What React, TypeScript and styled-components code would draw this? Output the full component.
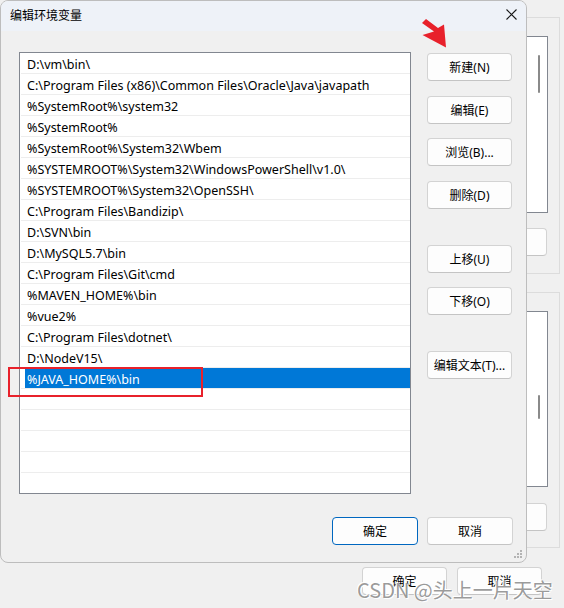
import React from "react";
import styled, { createGlobalStyle, css } from "styled-components";

const UI_FONT = `"Noto Sans", "Noto Sans CJK SC", sans-serif`;
const CJK_FONT = `"Noto Sans CJK SC", "Noto Sans", sans-serif`;

const Global = createGlobalStyle`
  html, body { margin: 0; padding: 0; background: #f0f0f0; }
  body { font-family: ${UI_FONT}; -webkit-font-smoothing: antialiased; }
`;

const Desktop = styled.div`
  position: relative;
  width: 564px;
  height: 608px;
  overflow: hidden;
  background: #f0f0f0;
`;

/* ---------- window behind ---------- */
const BackWindow = styled.div`
  display: flex;
  flex-direction: column;
  align-items: flex-end;
  box-sizing: border-box;
  height: 100%;
  padding: 17px 4px 0 0;
`;

const GroupBox = styled.div<{ $h: number; $mt?: number }>`
  width: 260px;
  height: ${(p) => p.$h}px;
  margin-top: ${(p) => p.$mt ?? 0}px;
  box-sizing: border-box;
  border: 1px solid #dcdcdc;
  display: flex;
  flex-direction: column;
  align-items: flex-end;
  padding: 18px 11px 0 0;
`;

const BgList = styled.div<{ $h: number }>`
  width: 220px;
  height: ${(p) => p.$h}px;
  box-sizing: border-box;
  background: #ffffff;
  border: 1px solid #828790;
  display: flex;
  justify-content: flex-end;
`;

const BgTrack = styled.div`
  width: 17px;
  height: 100%;
  display: flex;
  flex-direction: column;
  padding-left: 8px;
  box-sizing: border-box;
`;

const BgThumb = styled.div<{ $top: number; $h: number }>`
  width: 2px;
  height: ${(p) => p.$h}px;
  margin-top: ${(p) => p.$top}px;
  background: #8a8a8a;
  border-radius: 1px;
`;

const ButtonBase = css`
  box-sizing: border-box;
  height: 28px;
  background: #fdfdfd;
  border: 1px solid #d3d3d3;
  border-bottom-color: #c4c4c4;
  border-radius: 4px;
  font-family: ${UI_FONT};
  font-size: 12px;
  color: #000;
  display: flex;
  align-items: center;
  justify-content: center;
  padding: 0;
  white-space: nowrap;
`;

const BgButton = styled.div<{ $mt?: number; $mr?: number }>`
  ${ButtonBase};
  width: 85px;
  margin-top: ${(p) => p.$mt ?? 0}px;
  margin-right: ${(p) => p.$mr ?? 0}px;
`;

const BgFooter = styled.div`
  display: flex;
  gap: 10px;
  margin-top: 19px;
  margin-right: 18px;
`;

/* ---------- dialog ---------- */
const Dialog = styled.div`
  position: absolute;
  left: 0;
  top: 0;
  width: 527px;
  height: 563px;
  box-sizing: border-box;
  background: #f0f0f0;
  border: 1px solid #bdbdbd;
  border-radius: 8px;
  overflow: hidden;
  display: flex;
  flex-direction: column;
`;

const TitleBar = styled.div`
  height: 30px;
  flex: none;
  box-sizing: border-box;
  background: #eef2f8;
  display: flex;
  align-items: center;
  padding: 0 0 3px 9px;
`;

const Title = styled.span`
  font-family: ${CJK_FONT};
  font-size: 12px;
  color: #000;
`;

const CloseBtn = styled.div`
  margin-left: auto;
  width: 29px;
  height: 27px;
  display: flex;
  align-items: center;
  justify-content: center;
`;

const Body = styled.div`
  display: flex;
  flex-direction: column;
  padding: 21px 14px 0 18px;
`;

const MainRow = styled.div`
  display: flex;
  gap: 16px;
`;

const ListBox = styled.div`
  width: 392px;
  height: 442px;
  box-sizing: border-box;
  background: #fff;
  border: 1px solid #828790;
  overflow: hidden;
  padding-left: 1px;
`;

const Row = styled.div`
  height: 21px;
  box-sizing: border-box;
  border-bottom: 1px solid #ededed;
  display: flex;
  padding-left: 4px;
`;

const RowLabel = styled.div<{ $selected?: boolean }>`
  flex: 1;
  height: 20px;
  box-sizing: border-box;
  padding: 4px 0 0 2px;
  line-height: 16px;
  font-family: ${UI_FONT};
  font-size: 12.5px;
  white-space: nowrap;
  color: ${(p) => (p.$selected ? "#ffffff" : "#000000")};
  background: ${(p) => (p.$selected ? "#0078d7" : "transparent")};
`;

const SideColumn = styled.div`
  display: flex;
  flex-direction: column;
  width: 85px;
`;

const SideButton = styled.div<{ $mt: number }>`
  ${ButtonBase};
  width: 85px;
  margin-top: ${(p) => p.$mt}px;
`;

const Footer = styled.div`
  display: flex;
  justify-content: flex-end;
  gap: 9px;
  margin-top: 23px;
  margin-right: -1px;
`;

const FooterButton = styled.div<{ $primary?: boolean }>`
  ${ButtonBase};
  width: 86px;
  ${(p) =>
    p.$primary &&
    css`
      border: 1px solid #0067c0;
    `}
`;

const Grip = styled.svg`
  position: absolute;
  right: 3px;
  bottom: 3px;
`;

/* ---------- annotations ---------- */
const RedBox = styled.div`
  position: absolute;
  left: 8px;
  top: 367px;
  width: 195px;
  height: 30px;
  box-sizing: border-box;
  border: 2px solid #e8212b;
`;

const Arrow = styled.svg`
  position: absolute;
  left: 0;
  top: 0;
`;

const Watermark = styled.div`
  position: absolute;
  left: 357px;
  top: 577px;
  font-family: ${CJK_FONT};
  font-size: 20px;
  line-height: 26px;
  color: rgba(110, 110, 110, 0.7);
  text-shadow: 0 0 1px #fff, 1px 1px 0 #fff, -1px -1px 0 #fff;
  white-space: nowrap;
`;

const paths = [
  "D:\\vm\\bin\\",
  "C:\\Program Files (x86)\\Common Files\\Oracle\\Java\\javapath",
  "%SystemRoot%\\system32",
  "%SystemRoot%",
  "%SystemRoot%\\System32\\Wbem",
  "%SYSTEMROOT%\\System32\\WindowsPowerShell\\v1.0\\",
  "%SYSTEMROOT%\\System32\\OpenSSH\\",
  "C:\\Program Files\\Bandizip\\",
  "D:\\SVN\\bin",
  "D:\\MySQL5.7\\bin",
  "C:\\Program Files\\Git\\cmd",
  "%MAVEN_HOME%\\bin",
  "%vue2%",
  "C:\\Program Files\\dotnet\\",
  "D:\\NodeV15\\",
  "%JAVA_HOME%\\bin",
  "",
  "",
  "",
  "",
  "",
];

const sideButtons: { label: string; mt: number }[] = [
  { label: "新建(N)", mt: 1 },
  { label: "编辑(E)", mt: 15 },
  { label: "浏览(B)...", mt: 14 },
  { label: "删除(D)", mt: 15 },
  { label: "上移(U)", mt: 36 },
  { label: "下移(O)", mt: 14 },
  { label: "编辑文本(T)...", mt: 36 },
];

export default function App() {
  return (
    <>
      <Global />
      <Desktop>
        <BackWindow>
          <GroupBox $h={257}>
            <BgList $h={177}>
              <BgTrack>
                <BgThumb $top={18} $h={38} />
              </BgTrack>
            </BgList>
            <BgButton $mt={15} $mr={1} />
          </GroupBox>
          <GroupBox $h={256} $mt={18}>
            <BgList $h={176}>
              <BgTrack>
                <BgThumb $top={83} $h={24} />
              </BgTrack>
            </BgList>
            <BgButton $mt={16} $mr={1} />
          </GroupBox>
          <BgFooter>
            <BgButton>确定</BgButton>
            <BgButton>取消</BgButton>
          </BgFooter>
        </BackWindow>

        <Dialog>
          <TitleBar>
            <Title>编辑环境变量</Title>
            <CloseBtn>
              <svg width="11" height="11" viewBox="0 0 11 11">
                <path d="M0.5 0.5 L10.5 10.5 M10.5 0.5 L0.5 10.5" stroke="#1a1a1a" strokeWidth="1.1" />
              </svg>
            </CloseBtn>
          </TitleBar>
          <Body>
            <MainRow>
              <ListBox>
                {paths.map((p, i) => (
                  <Row key={i}>
                    <RowLabel $selected={i === 15}>{p}</RowLabel>
                  </Row>
                ))}
              </ListBox>
              <SideColumn>
                {sideButtons.map((b) => (
                  <SideButton key={b.label} $mt={b.mt}>
                    {b.label}
                  </SideButton>
                ))}
              </SideColumn>
            </MainRow>
            <Footer>
              <FooterButton $primary>确定</FooterButton>
              <FooterButton>取消</FooterButton>
            </Footer>
          </Body>
          <Grip width="10" height="10" viewBox="0 0 10 10">
            {[
              [8, 2],
              [5, 5],
              [8, 5],
              [2, 8],
              [5, 8],
              [8, 8],
            ].map(([x, y], i) => (
              <rect key={i} x={x - 1} y={y - 1} width="2" height="2" fill="#b3b3b3" />
            ))}
          </Grip>
        </Dialog>

        <RedBox />
        <Arrow width="564" height="608" viewBox="0 0 564 608">
          <polygon
            points="426,19 438,28 444,24.5 446,47.5 422.5,35 434,31.5 422,23"
            fill="#e8212b"
          />
        </Arrow>
        <Watermark>CSDN @头上一片天空</Watermark>
      </Desktop>
    </>
  );
}
